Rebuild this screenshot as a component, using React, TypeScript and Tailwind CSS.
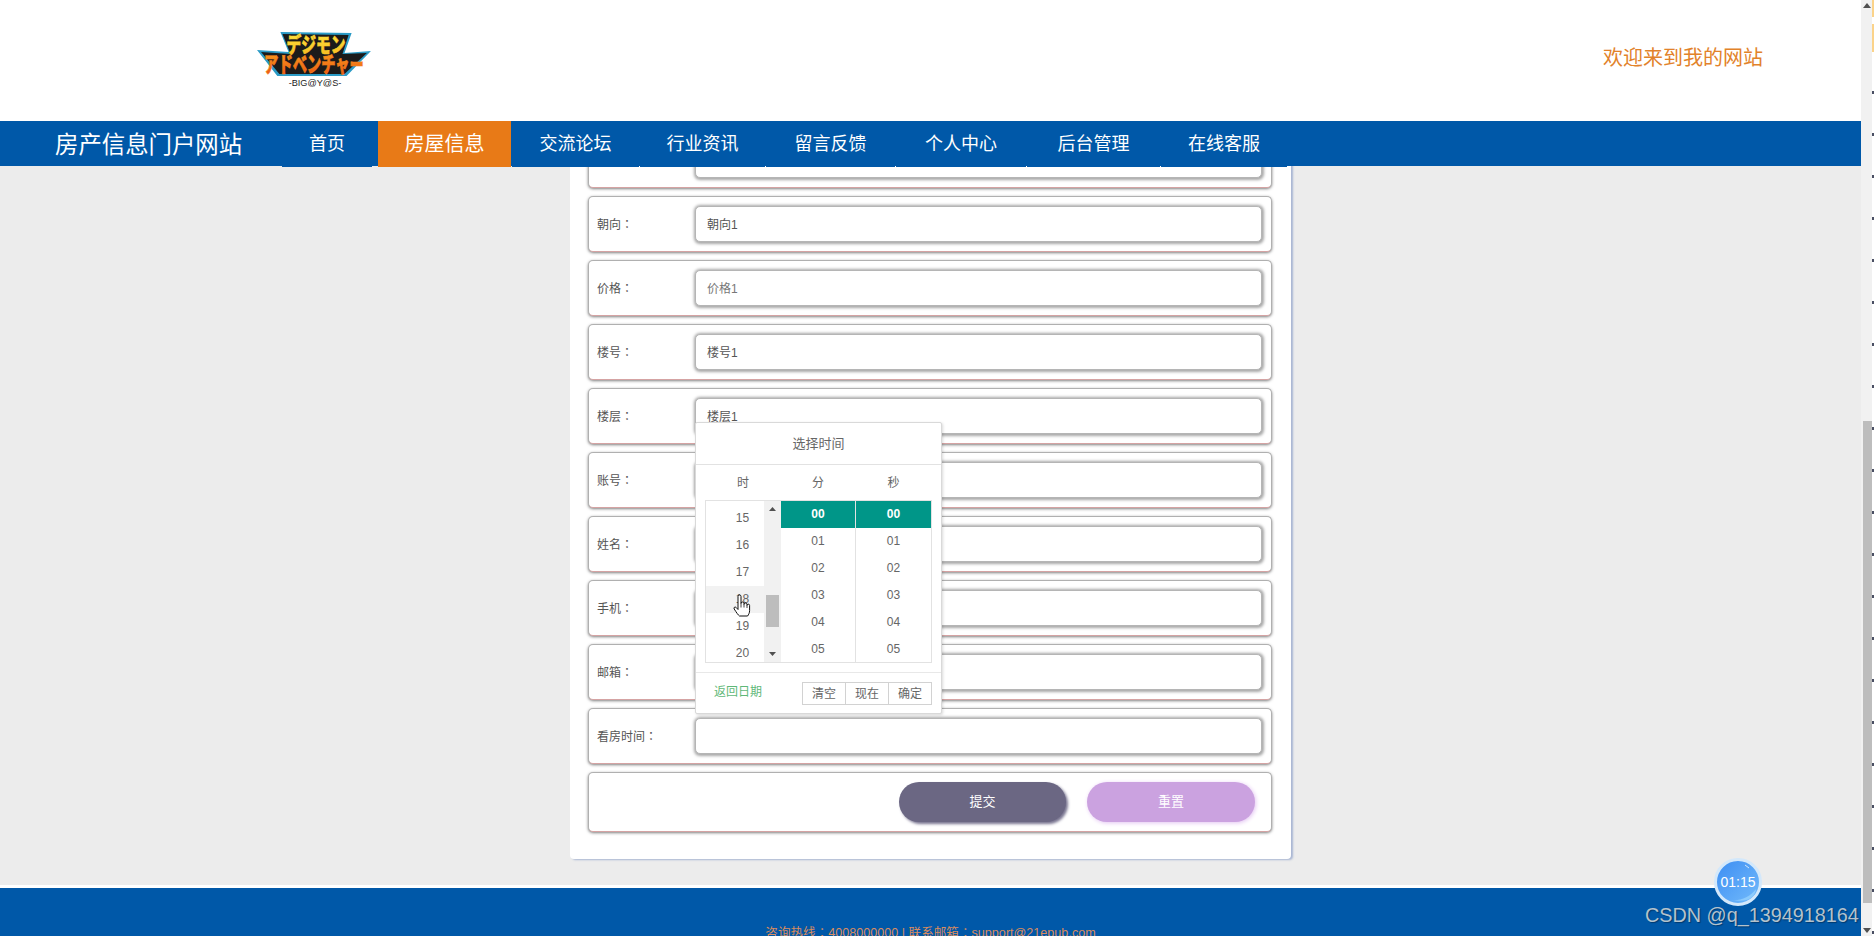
const rows = [
  { label: "户型", value: "户型1", tone: "text-[#555]" },
  { label: "朝向", value: "朝向1", tone: "text-[#555]" },
  { label: "价格", value: "价格1", tone: "text-[#777]" },
  { label: "楼号", value: "楼号1", tone: "text-[#555]" },
  { label: "楼层", value: "楼层1", tone: "text-[#555]" },
  { label: "账号", value: "账号1", tone: "text-[#555]" },
  { label: "姓名", value: "姓名1", tone: "text-[#555]" },
  { label: "手机", value: "手机1", tone: "text-[#555]" },
  { label: "邮箱", value: "邮箱1", tone: "text-[#555]" },
  { label: "看房时间", value: "", tone: "text-[#555]" },
]

const navItems = [
  { text: "首页", box: "w-[90px] mr-[6px]" },
  { text: "房屋信息", box: "w-[133px] mr-[1px] bg-[#e87a17] text-[20px]" },
  { text: "交流论坛", box: "w-[127px] mr-[1px]" },
  { text: "行业资讯", box: "w-[125px] mr-[1px]" },
  { text: "留言反馈", box: "w-[129px] mr-[1px]" },
  { text: "个人中心", box: "w-[130px] mr-[1px]" },
  { text: "后台管理", box: "w-[133px] mr-[1px]" },
  { text: "在线客服", box: "w-[126px]" },
]

const hours = ["15", "16", "17", "18", "19", "20"]
const minutes = ["00", "01", "02", "03", "04", "05"]

// the fullwidth colon sits centred in its cell in the TC font
const Colon = () => <span className="font-['Noto_Sans_CJK_TC',sans-serif]">：</span>

const Logo = () => (
  <svg width="116" height="56" viewBox="0 0 114 56" preserveAspectRatio="none">
    <defs>
      <linearGradient id="topFill" x1="0" y1="0" x2="0" y2="1">
        <stop offset="0" stopColor="#fff04a" />
        <stop offset="1" stopColor="#f7b51c" />
      </linearGradient>
      <linearGradient id="lowFill" x1="0" y1="0" x2="0" y2="1">
        <stop offset="0" stopColor="#fbb01f" />
        <stop offset="1" stopColor="#ea4d12" />
      </linearGradient>
    </defs>
    <polygon points="23,0 93,1 86,21 112,19 88,44 20,44 0,18 31,20" fill="#2b9bc6" />
    <polygon points="25,2 90,3 84,22 108,21 86,42 22,42 4,20 33,22" fill="#1b1b1b" />
    <text x="58" y="20" textAnchor="middle" textLength="58" lengthAdjust="spacingAndGlyphs" fontSize="21" fontWeight="900" fontFamily="'Noto Sans CJK JP', sans-serif" fill="url(#topFill)" stroke="#f9cf2a" strokeWidth="0.6">
      デジモン
    </text>
    <text x="56" y="40" textAnchor="middle" textLength="98" lengthAdjust="spacingAndGlyphs" fontSize="22" fontWeight="900" fontFamily="'Noto Sans CJK JP', sans-serif" fill="url(#lowFill)" stroke="#f3811a" strokeWidth="0.6">
      アドベンチャー
    </text>
    <text x="57" y="54" textAnchor="middle" fontSize="9" fontFamily="'Liberation Sans', sans-serif" fill="#222">
      -BIG@Y@S-
    </text>
  </svg>
)

const HandCursor = () => (
  <svg width="18" height="24" viewBox="0 0 18 24" fill="#fff" stroke="#111" strokeWidth="1">
    <path d="M5 2.500a1.500 1.500 0 0 1 3 0v7a1.500 1.500 0 0 1 3 0v1a1.500 1.500 0 0 1 3 0v1a1.300 1.300 0 0 1 2.600 0v5c0 2.500-1 4-2 5.500H6.500C5 21 3.500 18.500 1.200 15c-.9-1.400.8-2.700 2-1.500L5 15.500z" />
    <path d="M8 9.500v4M11 10.500v3M14 11.500v2.500" fill="none" strokeWidth="0.8" />
  </svg>
)

const TimePicker = () => (
  <div className="absolute left-[695px] top-[422px] w-[247px] h-[292px] bg-white border border-[#d9d9d9] rounded-[2px] shadow-[1px_1px_3px_rgba(0,0,0,0.15)] text-[12px] text-[#666]">
    <div className="h-[42px] text-[13px] flex items-center justify-center border-b border-[#e2e2e2]">选择时间</div>
    <div className="flex h-[35px] items-center px-[9px]">
      <div className="w-[76px] text-center">时</div>
      <div className="w-[74px] text-center">分</div>
      <div className="w-[77px] text-center">秒</div>
    </div>
    <div className="mx-[9px] h-[163px] flex border border-[#e2e2e2] overflow-hidden">
      <div className="w-[75px] flex shrink-0">
        <div className="w-[58px] pt-[4px] overflow-hidden">
          {hours.map((h) => (
            <div key={h} className={`h-[27px] leading-[27px] text-center pl-[15px] ${h === "18" ? "bg-[#f2f2f2]" : ""}`}>
              {h}
            </div>
          ))}
        </div>
        <div className="w-[17px] bg-[#f1f1f1] relative flex flex-col items-center justify-between py-[6px]">
          <svg width="7" height="4" viewBox="0 0 7 4"><polygon points="3.500,0 7,4 0,4" fill="#505050" /></svg>
          <div className="absolute left-[2px] right-[2px] top-[94px] h-[32px] bg-[#bdbdbd]" />
          <svg width="7" height="4" viewBox="0 0 7 4"><polygon points="0,0 7,0 3.500,4" fill="#505050" /></svg>
        </div>
      </div>
      <div className="w-[75px] shrink-0 border-r border-[#e2e2e2]">
        {minutes.map((m) => (
          <div key={m} className={`h-[27px] leading-[27px] text-center ${m === "00" ? "bg-[#009688] text-white font-bold" : ""}`}>
            {m}
          </div>
        ))}
      </div>
      <div className="flex-1">
        {minutes.map((m) => (
          <div key={m} className={`h-[27px] leading-[27px] text-center ${m === "00" ? "bg-[#009688] text-white font-bold" : ""}`}>
            {m}
          </div>
        ))}
      </div>
    </div>
    <div className="mt-[9px] border-t border-[#e8e8e8] flex items-center justify-between px-[9px] pt-[9px]">
      <span className="pl-[9px] text-[#5fb878] -mt-[3px]">返回日期</span>
      <div className="flex">
        {["清空", "现在", "确定"].map((t, i) => (
          <div key={t} className={`w-[44px] h-[23px] leading-[23px] text-center border border-[#d2d2d2] ${i > 0 ? "-ml-px" : ""}`}>
            {t}
          </div>
        ))}
      </div>
    </div>
  </div>
)

export default function App() {
  return (
    <div className="flex w-[1874px] h-[936px] overflow-hidden bg-white font-['Liberation_Sans','Noto_Sans_CJK_SC',sans-serif]">
      <div className="relative w-[1861px] shrink-0 flex flex-col">
        <header className="h-[121px] shrink-0 bg-white flex items-center justify-between pl-[257px] pr-[98px]">
          <div className="-mt-[1px]">
            <Logo />
          </div>
          <div className="text-[20px] text-[#e2822a] -mt-[5px]">欢迎来到我的网站</div>
        </header>

        <nav className="h-[45px] shrink-0 bg-[#0058a8] flex text-white relative z-10">
          <div className="w-[282px] pl-[55px] text-[23.4px] leading-[48px] shrink-0">房产信息门户网站</div>
          {navItems.map((item) => (
            <div key={item.text} className={`h-[46px] leading-[47px] text-center text-[18px] bg-[#0058a8] shrink-0 ${item.box}`}>
              {item.text}
            </div>
          ))}
        </nav>

        <main className="flex-1 min-h-0 overflow-hidden bg-[#ececec] flex flex-col items-center justify-end">
          <div className="w-[721px] shrink-0 mb-[26px] bg-white rounded-b-[4px] shadow-[2px_1px_2px_#a9b6d3] pl-[18px] pr-[19px] pb-[27px] flex flex-col gap-[8px]">
            {rows.map((r) => (
              <div key={r.label} className="h-[56px] shrink-0 flex items-center bg-white rounded-[5px] border border-[#b0b0b0] border-b-[#d5a3a3] shadow-[0_1px_3px_rgba(0,0,0,0.5)]">
                <div className="w-[106px] shrink-0 pl-[8px] pt-[1px] text-[12px] text-[#555]">
                  {r.label}
                  <Colon />
                </div>
                <div className={`w-[567px] h-[36px] leading-[37px] pl-[11px] text-[12px] rounded-[5px] border border-[#b5b5b5] bg-white shadow-[0.5px_0.5px_3px_1px_rgba(0,0,0,0.35)] ${r.tone}`}>
                  {r.value}
                </div>
              </div>
            ))}
            <div className="h-[60px] shrink-0 flex items-center justify-end gap-[21px] pr-[16px] pb-[1px] bg-white rounded-[5px] border border-[#b0b0b0] border-b-[#d5a3a3] shadow-[0_1px_3px_rgba(0,0,0,0.5)]">
              <div className="w-[167px] h-[40px] leading-[40px] text-center text-[13px] text-white rounded-[20px] bg-[#6b6783] shadow-[2px_2px_3px_#77738f]">提交</div>
              <div className="w-[168px] h-[40px] leading-[40px] text-center text-[13px] text-white rounded-[20px] bg-[#cba2e0] shadow-[1px_1px_4px_#e3c4f2]">重置</div>
            </div>
          </div>
        </main>

        <footer className="h-[51px] shrink-0 bg-white pt-[3px] overflow-hidden">
          <div className="h-[48px] bg-[#0058a8] pt-[34px] text-center text-[12.6px] leading-[20px] text-[#d98c5f]">
            咨询热线<Colon />4008000000 | 联系邮箱<Colon />support@21epub.com
          </div>
        </footer>

        <TimePicker />

        <div className="absolute left-[733px] top-[594px]">
          <HandCursor />
        </div>

        <div className="absolute left-[1714px] top-[858px] w-[48px] h-[48px] rounded-full border-[3px] border-[#d3e8fb] bg-gradient-to-br from-[#3d8ef2] to-[#72bafb] flex items-center justify-center text-[14px] text-white overflow-hidden">
          <svg className="absolute inset-0" width="42" height="42" viewBox="0 0 42 42" fill="none">
            <path d="M14 39c10 1 19-3 25-11-1 7-5 14-25 11z" fill="#8ccbfc" />
            <path d="M28 4l4 3" stroke="#cfe6fb" strokeWidth="1" />
          </svg>
          <span className="relative">01:15</span>
        </div>

        <div className="absolute left-[1645px] top-[902px] whitespace-nowrap text-[19.8px] leading-[26px] text-[#b4c2cc] [text-shadow:1px_1px_1px_rgba(0,0,0,0.35)]">
          CSDN @q_1394918164
        </div>
      </div>

      <div className="w-[11px] shrink-0 bg-[#f1f1f1] relative flex flex-col items-center justify-between py-[3px]">
        <svg width="8" height="5" viewBox="0 0 8 5"><polygon points="4,0 8,5 0,5" fill="#505050" /></svg>
        <div className="absolute left-[2px] right-0 top-[421px] h-[482px] bg-[#bdbdbd]" />
        <svg width="8" height="5" viewBox="0 0 8 5"><polygon points="0,0 8,0 4,5" fill="#505050" /></svg>
      </div>

      <div className="w-[2px] shrink-0 bg-white flex flex-col">
        <div className="h-[17px] bg-[#fbd38a]" />
        <div className="h-[28px] mt-[7px] bg-[#fbd38a]" />
        {Array.from({ length: 21 }, (_, i) => (
          <div key={i} className="h-[3px] mt-[39px] bg-[#4a4f63]" />
        ))}
      </div>
    </div>
  )
}
